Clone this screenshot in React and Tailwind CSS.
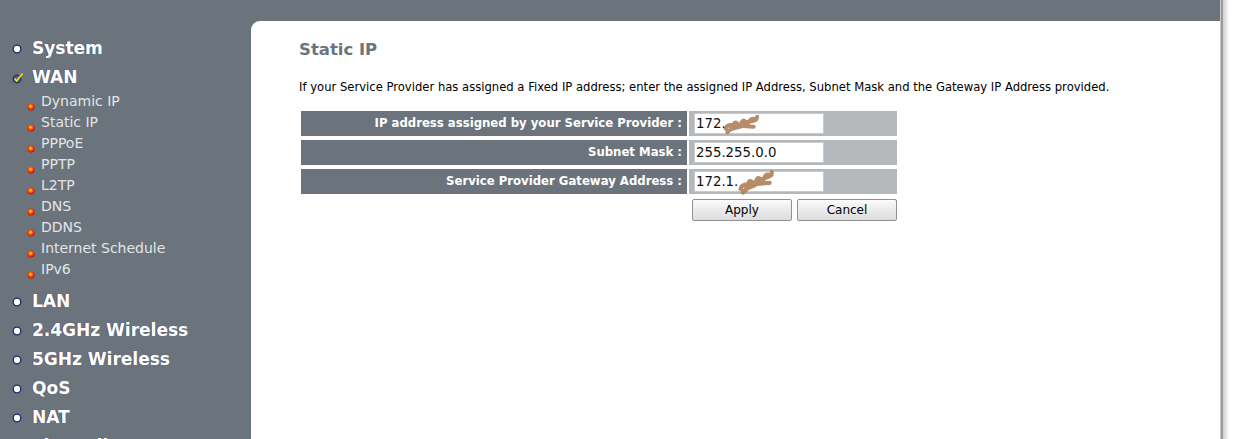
import React from 'react'

const FONT = { fontFamily: '"DejaVu Sans", Tahoma, Verdana, sans-serif' }

const mainTop = ['System', 'WAN']
const wanSub = ['Dynamic IP', 'Static IP', 'PPPoE', 'PPTP', 'L2TP', 'DNS', 'DDNS', 'Internet Schedule', 'IPv6']
const mainBottom = ['LAN', '2.4GHz Wireless', '5GHz Wireless', 'QoS', 'NAT', 'Firewall', 'Advanced']

function Bullet() {
  return (
    <svg width="10" height="10" viewBox="0 0 10 10" className="shrink-0">
      <circle cx="5" cy="5" r="3.8" fill="#ffffff" stroke="#23237a" strokeWidth="1.3" />
    </svg>
  )
}

function CheckBullet() {
  return (
    <svg width="12" height="12" viewBox="0 0 12 12" className="shrink-0 -mr-[2px]">
      <circle cx="5" cy="7" r="3.8" fill="#5a6068" stroke="#23237a" strokeWidth="1.2" />
      <path d="M2.5 6.5 L4.6 9 L10.5 1.5" fill="none" stroke="#f4e600" strokeWidth="1.6" />
    </svg>
  )
}

function RedDot() {
  return (
    <svg width="8" height="8" viewBox="0 0 8 8" className="shrink-0 mt-[11px]">
      <defs>
        <radialGradient id="rd" cx="0.45" cy="0.4" r="0.6">
          <stop offset="0" stopColor="#ffe040" />
          <stop offset="0.45" stopColor="#ff5a00" />
          <stop offset="1" stopColor="#d40000" />
        </radialGradient>
      </defs>
      <circle cx="4" cy="4" r="3.6" fill="url(#rd)" />
    </svg>
  )
}

function MainItem({ label, check }) {
  return (
    <div className="h-[29px] flex items-center gap-[10px]">
      {check ? <CheckBullet /> : <Bullet />}
      <span className="text-[17px] font-bold text-white [text-shadow:-1px_0_0_rgba(30,30,120,0.35)] whitespace-nowrap">{label}</span>
    </div>
  )
}

function SubItem({ label }) {
  return (
    <div className="h-[21px] flex items-center pl-[15px] gap-[6px]">
      <RedDot />
      <span className="text-[14px] text-[#e2e4e6] whitespace-nowrap">{label}</span>
    </div>
  )
}

function Scribble({ className }) {
  return (
    <svg viewBox="0 0 40 26" className={className}>
      <path
        d="M3 18 C6 10 9 20 12 13 C15 7 17 19 21 11 C24 5 26 17 30 9 C33 4 36 11 38 5 M5 22 C11 15 19 19 25 12 C29 9 33 11 37 8 M8 14 L34 16"
        fill="none"
        stroke="#a9784f"
        strokeWidth="4.5"
        strokeLinecap="round"
        opacity="0.85"
      />
    </svg>
  )
}

function Row({ label, value, scribble }) {
  return (
    <div className="flex h-[25px] gap-[2px]">
      <div className="w-[386px] bg-[#6b747c] flex items-center justify-end pr-[5px] text-[11.7px] font-bold text-white">
        {label}
      </div>
      <div className="flex-1 bg-[#b5b8bb] flex items-center pl-[5px]">
        <div className="relative w-[130px] h-[21px] bg-white border border-[#c9cacc] flex items-center pl-[1px] text-[13.3px] text-[#111]">
          {value}
          {scribble}
        </div>
      </div>
    </div>
  )
}

export default function App() {
  return (
    <div className="w-[1234px] h-[439px] flex bg-white overflow-hidden" style={FONT}>
      <div className="w-[1220px] h-full bg-[#6b747c] flex">
        <div className="w-[251px] pt-[34px] pl-[12px] overflow-hidden">
          {mainTop.map((m, i) => (
            <MainItem key={m} label={m} check={i === 1} />
          ))}
          <div className="-mt-[1px] mb-[7px]">
            {wanSub.map(s => (
              <SubItem key={s} label={s} />
            ))}
          </div>
          {mainBottom.map(m => (
            <MainItem key={m} label={m} />
          ))}
        </div>
        <div className="flex-1 mt-[21px] bg-white rounded-tl-[9px] pl-[48px] pt-[18px]">
          <h1 className="text-[16.5px] font-bold text-[#6b747c] leading-[22px]">Static IP</h1>
          <p className="mt-[19px] text-[11.6px] text-black leading-[14px]">
            If your Service Provider has assigned a Fixed IP address; enter the assigned IP Address, Subnet Mask and the Gateway IP Address provided.
          </p>
          <div className="mt-[17px] ml-[2px] w-[596px] flex flex-col gap-[4px]">
            <Row
              label="IP address assigned by your Service Provider :"
              value="172."
              scribble={<Scribble className="absolute left-[28px] top-[-3px] w-[36px] h-[26px]" />}
            />
            <Row label="Subnet Mask :" value="255.255.0.0" />
            <Row
              label="Service Provider Gateway Address :"
              value="172.1."
              scribble={<Scribble className="absolute left-[42px] top-[-5px] w-[38px] h-[30px] rotate-[-8deg]" />}
            />
            <div className="flex justify-end gap-[5px] mt-[1px]">
              <button className="w-[100px] h-[22px] rounded-[2px] border border-[#8e9194] bg-gradient-to-b from-[#fbfbfb] to-[#dcdcdc] text-[12px] text-black">
                Apply
              </button>
              <button className="w-[100px] h-[22px] rounded-[2px] border border-[#8e9194] bg-gradient-to-b from-[#fbfbfb] to-[#dcdcdc] text-[12px] text-black">
                Cancel
              </button>
            </div>
          </div>
        </div>
      </div>
      <div className="w-[1px] h-full bg-[#c8c8c8]" />
      <div className="w-[2px] h-full bg-[#9a9a9a]" />
      <div className="w-[6px] h-full bg-gradient-to-r from-[#cfcfcf] to-white" />
    </div>
  )
}
